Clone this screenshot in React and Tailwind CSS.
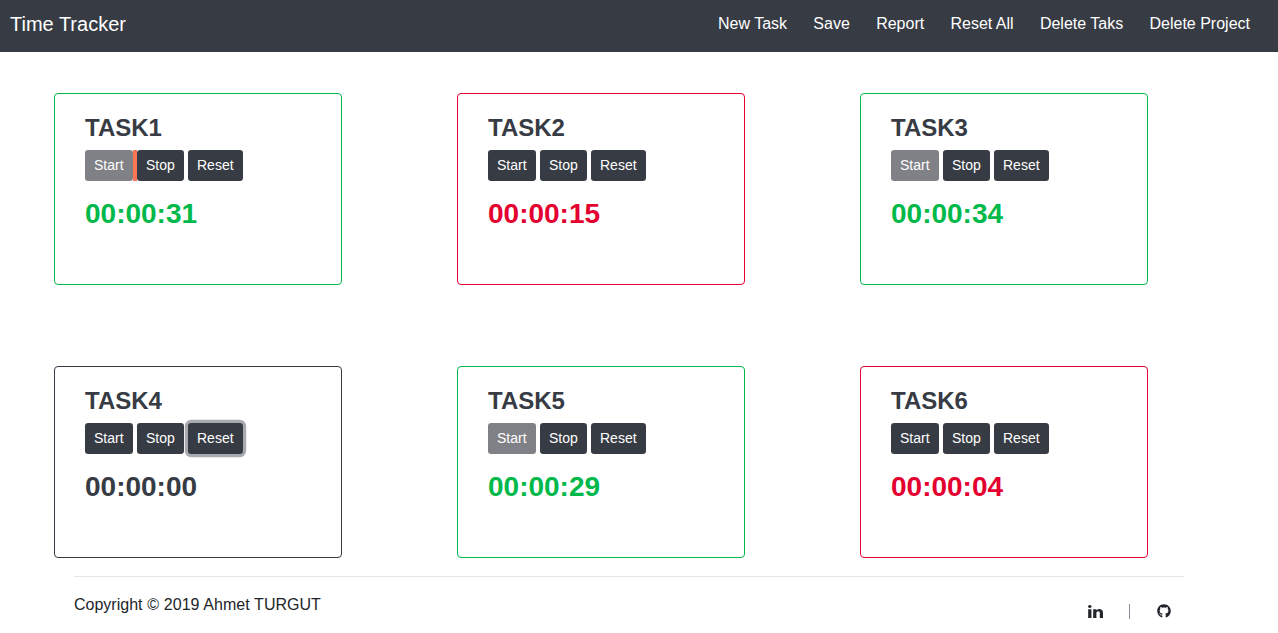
import React from "react";
import { FaGithub } from "react-icons/fa";

const NAV_ITEMS = ["New Task", "Save", "Report", "Reset All", "Delete Taks", "Delete Project"];

const TASKS = [
  { name: "TASK1", time: "00:00:31", status: "running", marker: true },
  { name: "TASK2", time: "00:00:15", status: "stopped" },
  { name: "TASK3", time: "00:00:34", status: "running" },
  { name: "TASK4", time: "00:00:00", status: "idle", focusReset: true },
  { name: "TASK5", time: "00:00:29", status: "running" },
  { name: "TASK6", time: "00:00:04", status: "stopped" },
];

const STATUS = {
  running: { border: "border-[#00b94a]", text: "text-[#00b94a]" },
  stopped: { border: "border-[#e4002f]", text: "text-[#e4002f]" },
  idle: { border: "border-[#373b44]", text: "text-[#373b44]" },
};

function TaskButton({ children, className }) {
  return (
    <button
      type="button"
      className={`h-[31px] rounded-[3.2px] pl-[9px] text-left text-sm leading-[21px] text-white ${className}`}
    >
      {children}
    </button>
  );
}

function TaskCard({ task }) {
  const status = STATUS[task.status];
  return (
    <section className={`h-[192px] w-[288px] rounded border bg-white pt-5 pl-[30px] ${status.border}`}>
      <h4 className="text-2xl leading-[28px] font-bold text-[#373b44]">{task.name}</h4>
      <div className="mt-2 flex">
        <TaskButton className={task.status === "running" ? "w-12 bg-[#808186]" : "w-12 bg-[#373b44]"}>Start</TaskButton>
        <span className={`w-1 ${task.marker ? "bg-[#fa7654]" : ""}`} />
        <TaskButton className="w-[47px] bg-[#373b44]">Stop</TaskButton>
        <span className="w-1" />
        <TaskButton
          className={
            task.focusReset ? "w-[55px] bg-[#373b44] shadow-[0_0_0_3.2px_#a9aaaf]" : "w-[55px] bg-[#373b44]"
          }
        >
          Reset
        </TaskButton>
      </div>
      <div className={`mt-4 text-[28px] leading-[34px] font-bold ${status.text}`}>{task.time}</div>
    </section>
  );
}

function LinkedinIcon({ className }) {
  return (
    <svg viewBox="128 148 1536 1468" preserveAspectRatio="none" fill="currentColor" className={className}>
      <path d="M477 625v991h-330v-991h330zm21-306q1 73-50.5 122t-135.5 49h-2q-82 0-132-49t-50-122q0-74 51.5-122.5t134.5-48.5 133 48.5 51 122.5zm1166 729v568h-329v-530q0-105-40.5-164.5t-126.5-59.5q-63 0-105.5 34.5t-63.5 85.5q-11 30-11 81v553h-329q2-399 2-647t-1-296l-1-48h329v144h-2q20-32 41-56t56.5-52 87-43.5 114.5-15.5q171 0 275 113.5t104 332.5z" />
    </svg>
  );
}

export default function App() {
  return (
    <div className="h-[633px] overflow-hidden bg-white font-['Liberation_Sans',Arial,sans-serif] text-[#212529]">
      <header className="flex h-[52px] items-start justify-between bg-[#373b44] pr-7 pl-[10px] text-white">
        <a className="mt-[9px] text-xl leading-[30px]">Time Tracker</a>
        <nav className="mt-3 flex gap-[26.3px] text-base leading-6">
          {NAV_ITEMS.map((item) => (
            <a key={item}>{item}</a>
          ))}
        </nav>
      </header>
      <main className="mt-[41px] ml-[54px] grid w-max grid-cols-3 gap-x-[115px] gap-y-[81px]">
        {TASKS.map((task) => (
          <TaskCard key={task.name} task={task} />
        ))}
      </main>
      <footer className="mt-[18px] ml-[74px] flex w-[1110px] justify-between border-t border-[#e5e5e5]">
        <p className="mt-4 text-base leading-6 [word-spacing:0.35px]">Copyright © 2019 Ahmet TURGUT</p>
        <div className="mt-[26px] mr-[13px] flex h-4 items-center">
          <LinkedinIcon className="h-[13px] w-[15px]" />
          <span className="ml-[26px] h-[15px] w-px bg-[#8b919b]" />
          <FaGithub className="ml-[27px] size-[14px]" />
        </div>
      </footer>
    </div>
  );
}
